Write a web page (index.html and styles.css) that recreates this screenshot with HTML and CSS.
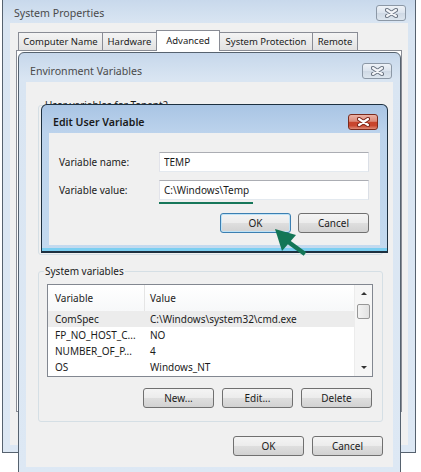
FILE: index.html
```html
<!DOCTYPE html>
<html>
<head>
<meta charset="utf-8">
<title>Edit User Variable</title>
<link rel="stylesheet" href="styles.css">
</head>
<body>
<div class="win sp">
  <div class="tbar">
    <span class="ttl">System Properties</span>
    <span class="xbtn"><svg width="13" height="10" viewBox="0 0 13 10"><path d="M2 2L11 8M11 2L2 8" stroke="#6b7582" stroke-width="4.2" stroke-linecap="round"/><path d="M2 2L11 8M11 2L2 8" stroke="#f4f6f9" stroke-width="2.2" stroke-linecap="round"/></svg></span>
  </div>
  <div class="client sp-client">
    <div class="tabs">
      <span class="tab t1">Computer Name</span>
      <span class="tab t2">Hardware</span>
      <span class="tab t3 sel">Advanced</span>
      <span class="tab t4">System Protection</span>
      <span class="tab t5">Remote</span>
    </div>
    <div class="tabpanel"></div>
  </div>
</div>

<div class="win env">
  <div class="tbar">
    <span class="ttl">Environment Variables</span>
    <span class="xbtn"><svg width="13" height="10" viewBox="0 0 13 10"><path d="M2 2L11 8M11 2L2 8" stroke="#6b7582" stroke-width="4.2" stroke-linecap="round"/><path d="M2 2L11 8M11 2L2 8" stroke="#f4f6f9" stroke-width="2.2" stroke-linecap="round"/></svg></span>
  </div>
  <div class="client env-client">
    <fieldset class="grp user-grp"><legend>User variables for Tenant2</legend></fieldset>
    <fieldset class="grp sys-grp">
      <legend>System variables</legend>
      <div class="list">
        <div class="rows">
          <div class="hdr"><span class="c1">Variable</span><span class="c2">Value</span></div>
          <div class="row selrow"><span class="c1">ComSpec</span><span class="c2">C:\Windows\system32\cmd.exe</span></div>
          <div class="row"><span class="c1">FP_NO_HOST_C...</span><span class="c2">NO</span></div>
          <div class="row"><span class="c1">NUMBER_OF_P...</span><span class="c2">4</span></div>
          <div class="row"><span class="c1">OS</span><span class="c2">Windows_NT</span></div>
        </div>
        <div class="sb">
          <div class="sbbtn"><span class="up"></span></div>
          <div class="thumb"></div>
          <div class="sbfill"></div>
          <div class="sbbtn"><span class="down"></span></div>
        </div>
      </div>
      <div class="btnrow grpbtns">
        <button>New...</button>
        <button>Edit...</button>
        <button>Delete</button>
      </div>
    </fieldset>
    <div class="btnrow dlgbtns">
      <button>OK</button>
      <button>Cancel</button>
    </div>
  </div>
</div>

<div class="win edit">
  <div class="tbar">
    <span class="ttl">Edit User Variable</span>
    <span class="xbtn red"><svg width="13" height="10" viewBox="0 0 13 10"><path d="M2 2L11 8M11 2L2 8" stroke="#7a2417" stroke-width="4.2" stroke-linecap="round"/><path d="M2 2L11 8M11 2L2 8" stroke="#ffffff" stroke-width="2.2" stroke-linecap="round"/></svg></span>
  </div>
  <div class="client edit-client">
    <div class="field">
      <label>Variable name:</label>
      <input type="text" value="TEMP">
    </div>
    <div class="field">
      <label>Variable value:</label>
      <div class="valwrap">
        <input type="text" value="C:\Windows\Temp">
        <span class="uline"></span>
      </div>
    </div>
    <div class="btnrow editbtns">
      <button class="focus">OK</button>
      <button>Cancel</button>
    </div>
  </div>
</div>

<svg class="arrow" width="42" height="34" viewBox="0 0 42 34">
  <polygon points="7,5 14,27 28,11" fill="#137656"/>
  <path d="M19 17L37 30" stroke="#137656" stroke-width="4.5"/>
</svg>
</body>
</html>
```

FILE: styles.css
```css
html, body {
  margin: 0;
  padding: 0;
  overflow: hidden;
}
body {
  width: 421px;
  height: 472px;
  position: relative;
  background: #ffffff;
  font-family: "Noto Sans", sans-serif;
  font-size: 10px;
  color: #1b1b1b;
}

.win {
  position: absolute;
  box-sizing: border-box;
  display: flex;
  flex-direction: column;
  background: linear-gradient(180deg, #c6d7eb 0, #d9e5f2 26px, #dde8f4 100%);
}

.tbar {
  display: flex;
  align-items: center;
  box-sizing: border-box;
  padding-top: 6px;
  flex: none;
}
.ttl {
  flex: 1;
  font-size: 10.6px;
  color: #4a4a4a;
  white-space: nowrap;
}
.xbtn {
  width: 30px;
  height: 16px;
  box-sizing: border-box;
  border: 1px solid #8c98a6;
  border-radius: 3px;
  display: flex;
  align-items: center;
  justify-content: center;
  background: linear-gradient(180deg, #eef2f7 0%, #dce4ee 48%, #cfd9e5 52%, #dde6ef 100%);
}
.xbtn.red {
  border-color: #7b2b1d;
  background: linear-gradient(180deg, #ebb2a5 0%, #dc8a79 45%, #c8452d 52%, #c9462e 75%, #df8b77 100%);
}

.client {
  background: #f0f0f0;
  display: flex;
  flex-direction: column;
}

/* System Properties */
.sp {
  left: 2px;
  top: -4px;
  width: 414px;
  height: 457px;
  border: 1px solid #56626f;
  padding: 0 7px 7px;
}
.sp .tbar {
  height: 26px;
  padding-left: 4px;
  padding-right: 2px;
}
.sp-client {
  flex: 1;
  padding-top: 7px;
}
.tabs {
  display: flex;
  align-items: flex-end;
  height: 20px;
  padding-left: 8px;
  position: relative;
  z-index: 1;
  font-size: 9.5px;
}
.tab {
  height: 18px;
  box-sizing: border-box;
  border: 1px solid #898c95;
  border-bottom: 0;
  border-left: 0;
  display: flex;
  align-items: center;
  justify-content: center;
  background: linear-gradient(180deg, #f4f4f4, #e2e2e2);
  white-space: nowrap;
}
.t1 { width: 85px; border-left: 1px solid #898c95; }
.t2 { width: 54px; }
.t3 { width: 64px; }
.t4 { width: 93px; }
.t5 { width: 45px; }
.tab.sel {
  height: 21px;
  margin-bottom: -1px;
  margin-left: -1px;
  border-left: 1px solid #898c95;
  background: #ffffff;
  padding-bottom: 2px;
}
.tabpanel {
  margin-left: 6px;
  margin-right: 6px;
  height: 360px;
  border: 1px solid #898c95;
  background: #ffffff;
}

/* Environment Variables */
.env {
  left: 18px;
  top: 52px;
  width: 383px;
  border: 1px solid #56626f;
  border-radius: 6px 6px 0 0;
  padding: 0 7px 8px;
}
.env .tbar {
  height: 29px;
  padding-left: 4px;
  padding-right: 1px;
}
.env-client {
  padding: 17px 10px 11px 12px;
}
.grp {
  margin: 0;
  border: 1px solid #d5dfe5;
  border-radius: 3px;
  padding: 6px 9px 13px 8px;
  min-width: 0;
}
.grp legend {
  padding: 0 1px;
  margin-left: -3px;
  line-height: 13px;
}
.user-grp {
  box-sizing: border-box;
  height: 156px;
}
.sys-grp {
  margin-top: 10px;
}

.list {
  display: flex;
  height: 93px;
  box-sizing: border-box;
  border: 1px solid #828790;
  background: #ffffff;
}
.rows {
  flex: 1;
  overflow: hidden;
}
.hdr, .row {
  display: grid;
  grid-template-columns: 96px 1fr;
  align-items: center;
  white-space: nowrap;
}
.hdr {
  height: 26px;
  background: linear-gradient(180deg, #ffffff, #f7f8f9);
}
.hdr .c1 { padding-left: 7px; }
.hdr .c2 {
  padding-left: 5px;
  border-left: 1px solid #e5e5e5;
  height: 26px;
  display: flex;
  align-items: center;
}
.row { height: 16px; }
.row .c1 { padding-left: 7px; }
.row .c2 { padding-left: 6px; }
.selrow { background: #ececec; }

.sb {
  width: 17px;
  display: flex;
  flex-direction: column;
  align-items: center;
  background: #f6f6f6;
  border-left: 1px solid #ececec;
}
.sbbtn {
  height: 17px;
  width: 17px;
  display: flex;
  align-items: center;
  justify-content: center;
}
.up {
  width: 0;
  height: 0;
  border-left: 3px solid transparent;
  border-right: 3px solid transparent;
  border-bottom: 3px solid #333333;
}
.down {
  width: 0;
  height: 0;
  border-left: 3px solid transparent;
  border-right: 3px solid transparent;
  border-top: 3px solid #333333;
}
.thumb {
  margin-top: 2px;
  width: 13px;
  height: 15px;
  box-sizing: border-box;
  border: 1px solid #979797;
  border-radius: 2px;
  background: linear-gradient(90deg, #f3f3f3, #e2e2e2);
}
.sbfill { flex: 1; }

.btnrow {
  display: flex;
  justify-content: flex-end;
  gap: 8px;
}
.grpbtns {
  margin-top: 11px;
  padding-right: 1px;
}
.dlgbtns {
  margin-top: 14px;
}
button {
  width: 71px;
  height: 20px;
  box-sizing: border-box;
  padding: 0;
  border: 1px solid #707070;
  border-radius: 3px;
  background: linear-gradient(180deg, #f4f4f4 0%, #ececec 48%, #dedede 52%, #d2d2d2 100%);
  font: inherit;
  color: #1b1b1b;
}
button.focus {
  border-color: #3c7fb1;
  box-shadow: inset 0 0 0 1px #bfe3f7;
}

/* Edit User Variable */
.edit {
  left: 41px;
  top: 104px;
  width: 347px;
  border: 1px solid #1d3040;
  border-bottom-width: 2px;
  border-radius: 6px 6px 0 0;
  padding: 0 7px 6px;
  background: linear-gradient(180deg, #a9c5e4 0, #bcd3ec 28px, #c4daef 100%);
  box-shadow: inset 0 -3px 0 #7ccff1;
}
.edit .tbar {
  height: 28px;
  padding-left: 4px;
  padding-right: 2px;
}
.edit .ttl {
  font-weight: 600;
  color: #1a1a1a;
}
.edit-client {
  padding: 19px 11px 12px 10px;
}
.field {
  display: flex;
  align-items: center;
}
.field + .field {
  margin-top: 8px;
}
.field label {
  width: 100px;
  flex: none;
}
input {
  flex: 1;
  min-width: 0;
  height: 20px;
  box-sizing: border-box;
  border: 1px solid;
  border-color: #abadb3 #dbdfe6 #e3e9ef #e2e3ea;
  padding: 0 4px;
  font: inherit;
  color: #1b1b1b;
  background: #ffffff;
  outline: none;
}
.valwrap {
  flex: 1;
  display: flex;
  position: relative;
}
.uline {
  position: absolute;
  left: 0;
  top: 22px;
  width: 94px;
  height: 2px;
  background: #17775a;
}
.editbtns {
  margin-top: 13px;
  gap: 7px;
}

.arrow {
  position: absolute;
  left: 268px;
  top: 224px;
}
```
